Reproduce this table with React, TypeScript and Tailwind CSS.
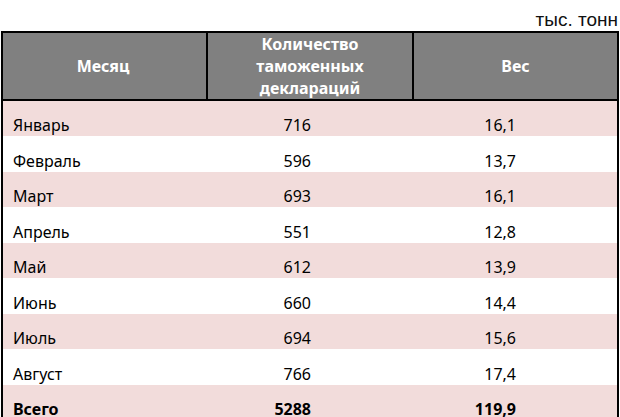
import React from "react";

const rows: [string, string, string][] = [
  ["Январь", "716", "16,1"],
  ["Февраль", "596", "13,7"],
  ["Март", "693", "16,1"],
  ["Апрель", "551", "12,8"],
  ["Май", "612", "13,9"],
  ["Июнь", "660", "14,4"],
  ["Июль", "694", "15,6"],
  ["Август", "766", "17,4"],
];

export default function App() {
  return (
    <div className="w-[620px] h-[417px] overflow-hidden bg-white text-black" style={{ fontFamily: "'Noto Sans', 'Open Sans', sans-serif" }}>
      <div className="h-[31px] flex items-end justify-end pr-[2px] pb-[1px]">
        <span className="text-[19px] leading-[20px] text-[#111]" style={{ fontFamily: "'Liberation Sans', Arial, sans-serif" }}>
          тыс. тонн
        </span>
      </div>
      <div className="ml-[1px] w-[618px] border-2 border-black">
        <div className="grid grid-cols-[203px_204px_203px] gap-x-[2px] bg-black border-b-2 border-black">
          <div className="h-[66px] bg-[#808080] flex items-center justify-center text-white font-bold text-[16px] leading-[22px] pr-[3px]">
            Месяц
          </div>
          <div className="h-[66px] bg-[#808080] flex flex-col items-center justify-center text-white font-bold text-[16px] leading-[22px] text-center">
            <span>Количество</span>
            <span>таможенных</span>
            <span>деклараций</span>
          </div>
          <div className="h-[66px] bg-[#808080] flex items-center justify-center text-white font-bold text-[16px] leading-[22px]">
            Вес
          </div>
        </div>
        {rows.map((r, i) => (
          <div
            key={r[0]}
            className={`grid grid-cols-[205px_206px_203px] items-end text-[16px] leading-[20px] ${
              i % 2 === 0 ? "h-[35px] bg-[#f2dcdb]" : "h-[36px] bg-white"
            }`}
          >
            <div className="pl-[10px] pb-[1px]">{r[0]}</div>
            <div className="text-right pr-[103px] pb-[1px]">{r[1]}</div>
            <div className="text-right pr-[101px] pb-[1px]">{r[2]}</div>
          </div>
        ))}
        <div className="grid grid-cols-[205px_206px_203px] items-end text-[16px] leading-[20px] h-[35px] bg-[#f2dcdb] font-bold">
          <div className="pl-[10px] pb-[1px]">Всего</div>
          <div className="text-right pr-[103px] pb-[1px]">5288</div>
          <div className="text-right pr-[101px] pb-[1px]">119,9</div>
        </div>
      </div>
    </div>
  );
}
